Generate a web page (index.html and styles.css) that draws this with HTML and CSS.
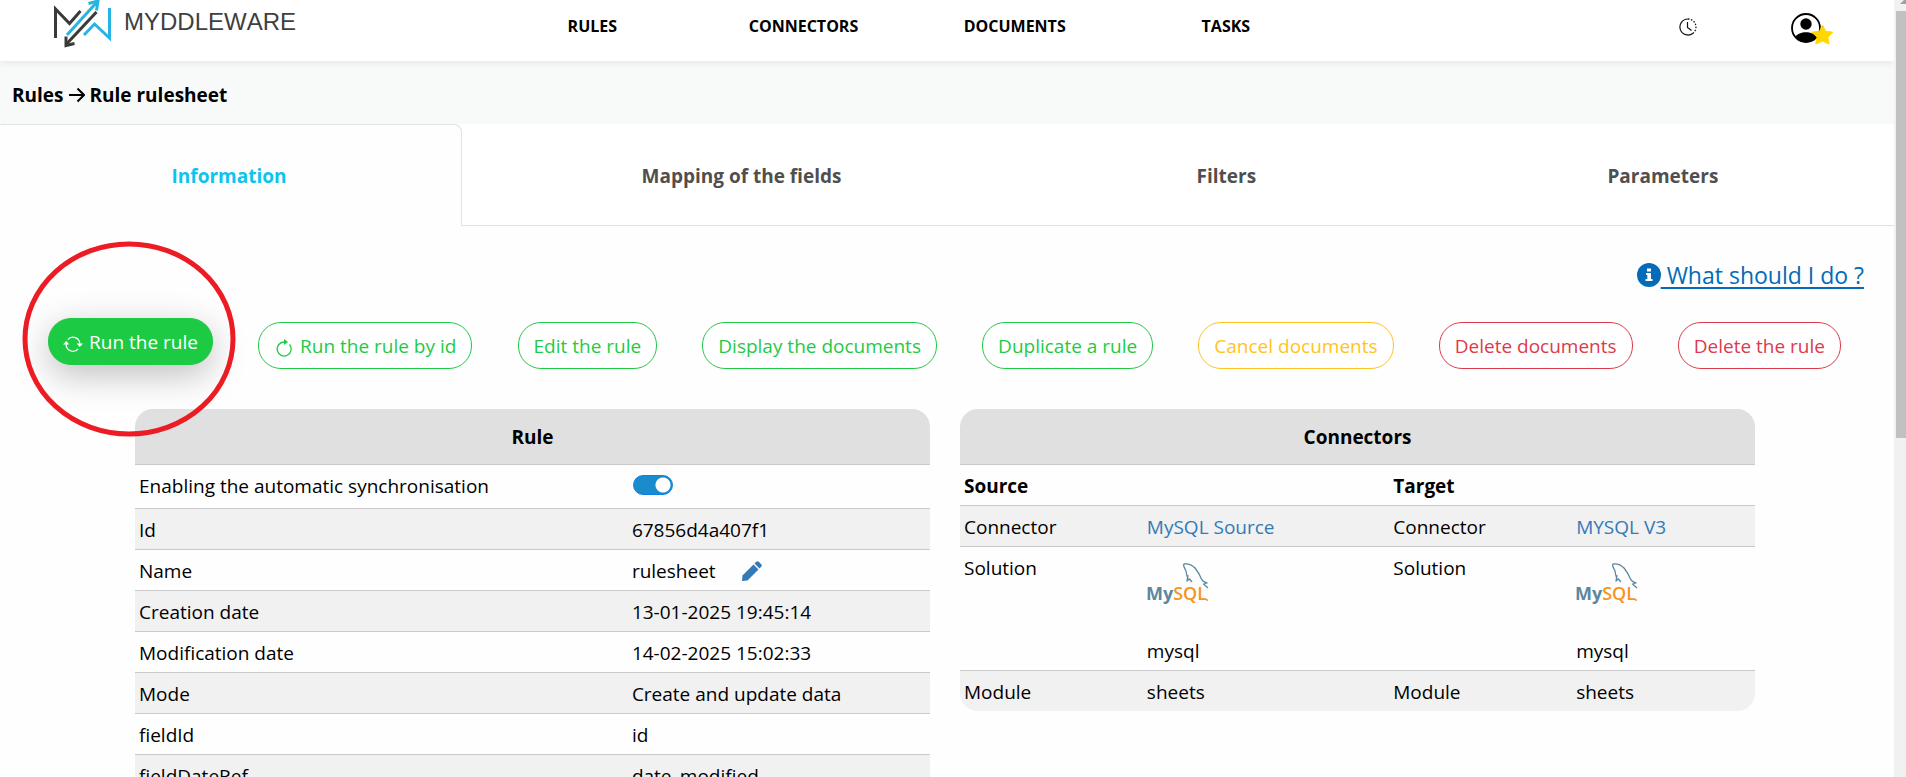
FILE: index.html
```
<!DOCTYPE html>
<html lang="en">
<head>
<meta charset="utf-8">
<title>Myddleware - Rule rulesheet</title>
<link rel="stylesheet" href="styles.css">
</head>
<body>
<div class="app">
  <div class="page">
    <header class="topbar">
      <a class="brand" href="#" aria-label="Myddleware">
        <svg class="brand-logo" width="256" height="50" viewBox="0 0 256 50">
          <g fill="none" stroke="#3a3a3a" stroke-width="3">
            <path d="M5.500 38V9L19.500 23.500L30.500 11"/>
            <path d="M46.500 12L16.500 44"/>
            <path d="M16 36.500V45.500L24.500 43.500"/>
          </g>
          <g fill="none" stroke="#27b4e4" stroke-width="3">
            <path d="M17 35L47 2"/>
            <path d="M38.500 3.500L48 1L46.500 10.500"/>
            <path d="M34 35L44.500 24L59.500 38V8"/>
          </g>
          <text class="brand-name" x="74" y="30">MYDDLEWARE</text>
        </svg>
      </a>
      <nav class="menu" aria-label="Main">
        <a href="#">RULES</a>
        <a href="#">CONNECTORS</a>
        <a href="#">DOCUMENTS</a>
        <a href="#">TASKS</a>
      </nav>
      <div class="tools">
        <a href="#" aria-label="History">
          <svg width="18" height="18" viewBox="0 0 18 18" fill="none" stroke="#111">
            <path d="M9 1A8 8 0 1 0 14 15.200" stroke-width="1.200"/>
            <path d="M9 1A8 8 0 0 1 14 15.200" stroke-width="1.300" stroke-dasharray="1.500 1.500"/>
            <path d="M8.500 4V9.500L12.500 12.500" stroke-width="1.200"/>
          </svg>
        </a>
        <a class="account" href="#" aria-label="Account">
          <svg width="42" height="32" viewBox="0 0 42 32">
            <circle cx="15" cy="15" r="14" fill="#fff" stroke="#000" stroke-width="1.800"/>
            <circle cx="15" cy="11" r="5.700"/>
            <path d="M4 24C8 17.500 22 17.500 26 24A14 14 0 0 1 4 24Z"/>
            <path d="M31.500 12L34.500 18.200L41.800 19.200L36.800 24.200L38 31L31.500 28L24.800 31L26 24.200L21 19.200L28.500 18.200Z" fill="#ffd600" stroke="#ffd600" stroke-linejoin="round"/>
          </svg>
        </a>
      </div>
    </header>

    <div class="crumbs">
      <a href="#">Rules</a>
      <svg width="16" height="16" viewBox="0 0 16 16" fill="none" stroke="#000" stroke-width="2" aria-hidden="true"><path d="M0 8H14M8.500 1.500L15 8L8.500 14.500"/></svg>
      <span>Rule rulesheet</span>
    </div>

    <nav class="tabs" aria-label="Rule sections">
      <button class="tab tab-active" type="button">Information</button>
      <button class="tab" type="button">Mapping of the fields</button>
      <button class="tab" type="button">Filters</button>
      <button class="tab" type="button">Parameters</button>
    </nav>

    <main>
      <div class="help">
        <a href="#"><svg width="24" height="24" viewBox="0 0 24 24" aria-hidden="true"><circle cx="12" cy="12" r="12" fill="#036bb7"/><path d="M10 5.500H14V8.500H10ZM9 10H14V16H15.500V18H8.500V16H10.300V12H9Z" fill="#fff"/></svg><span>&nbsp;What should I do ?</span></a>
      </div>

      <div class="actions">
        <div class="highlight">
          <button class="btn btn-run" type="button"><svg width="20" height="18" viewBox="0 0 20 18" fill="none" stroke="currentColor" stroke-width="1.200" aria-hidden="true"><path d="M4.800 4.600A6.800 6.800 0 0 1 16.800 9M3.200 9A6.800 6.800 0 0 0 15.200 13.800"/><path d="M0 9.500L3.200 6L6.400 9.500ZM13.600 8.500H20L16.800 12Z" fill="currentColor" stroke="none"/></svg>Run the rule</button>
          <svg class="ring" width="214" height="196" viewBox="0 0 214 196" aria-hidden="true"><ellipse cx="107" cy="98" rx="104" ry="95" fill="none" stroke="#ed1c24" stroke-width="5"/></svg>
        </div>
        <button class="btn btn-green" type="button"><svg width="20" height="18" viewBox="0 0 20 18" fill="none" stroke="currentColor" stroke-width="1.300" aria-hidden="true"><path d="M10 3A7 7 0 1 0 15.500 5.500"/><path d="M10 0L14 3L10 6Z" fill="currentColor" stroke="none"/></svg>Run the rule by id</button>
        <button class="btn btn-green" type="button">Edit the rule</button>
        <button class="btn btn-green" type="button">Display the documents</button>
        <button class="btn btn-green" type="button">Duplicate a rule</button>
        <button class="btn btn-yellow" type="button">Cancel documents</button>
        <button class="btn btn-red" type="button">Delete documents</button>
        <button class="btn btn-red" type="button">Delete the rule</button>
      </div>

      <div class="panels">
        <table class="panel panel-rule">
          <colgroup><col class="c-name"><col></colgroup>
          <thead><tr><th colspan="2">Rule</th></tr></thead>
          <tbody>
            <tr class="row-switch"><td><label for="sync">Enabling the automatic synchronisation</label></td><td><input class="switch" id="sync" type="checkbox" role="switch" checked></td></tr>
            <tr><td>Id</td><td>67856d4a407f1</td></tr>
            <tr><td>Name</td><td><div class="name-cell">rulesheet
              <button class="edit" type="button" aria-label="Edit the name"><svg width="20" height="20" viewBox="0 0 20 20" fill="#337ab7"><path d="M0 20L0.500 14.500L11.500 3.500L16.500 8.500L5.500 19.500Z"/><path d="M12.500 2.500L14 1Q15.500 -.5 17 1L19.200 3.200Q20.500 4.500 19 6L17.500 7.500Z"/></svg></button></div></td></tr>
            <tr><td>Creation date</td><td>13-01-2025 19:45:14</td></tr>
            <tr><td>Modification date</td><td>14-02-2025 15:02:33</td></tr>
            <tr><td>Mode</td><td>Create and update data</td></tr>
            <tr><td>fieldId</td><td>id</td></tr>
            <tr><td>fieldDateRef</td><td>date_modified</td></tr>
          </tbody>
        </table>

        <table class="panel panel-connectors">
          <colgroup><col class="c-label"><col class="c-source"><col class="c-label"><col></colgroup>
          <thead><tr><th colspan="4">Connectors</th></tr></thead>
          <tbody>
            <tr class="subhead"><th colspan="2">Source</th><th colspan="2">Target</th></tr>
            <tr><td>Connector</td><td><a href="#">MySQL Source</a></td><td>Connector</td><td><a href="#">MYSQL V3</a></td></tr>
            <tr>
              <td>Solution</td>
              <td><svg class="mysql" width="62" height="62" viewBox="0 0 62 62" role="img" aria-label="MySQL">
                <g fill="none" stroke="#5d87a1" stroke-width="1.300" stroke-linejoin="round"><path d="M41 26Q39.500 22 39 18Q35.500 11.500 37 11Q43 10 48 15Q52 20 54.500 26Q56 29 60 30L56.500 31L61 35"/><path d="M41 22L40 28L42.500 26L45 29"/></g>
                <text class="my" x="-1" y="47">My<tspan class="sql">SQL</tspan></text><circle cx="60" cy="47" r="1" fill="#f7941e"/></svg>mysql</td>
              <td>Solution</td>
              <td><svg class="mysql" width="62" height="62" viewBox="0 0 62 62" role="img" aria-label="MySQL">
                <g fill="none" stroke="#5d87a1" stroke-width="1.300" stroke-linejoin="round"><path d="M41 26Q39.500 22 39 18Q35.500 11.500 37 11Q43 10 48 15Q52 20 54.500 26Q56 29 60 30L56.500 31L61 35"/><path d="M41 22L40 28L42.500 26L45 29"/></g>
                <text class="my" x="-1" y="47">My<tspan class="sql">SQL</tspan></text><circle cx="60" cy="47" r="1" fill="#f7941e"/></svg>mysql</td>
            </tr>
            <tr><td>Module</td><td>sheets</td><td>Module</td><td>sheets</td></tr>
          </tbody>
        </table>
      </div>
    </main>
  </div>
  <div class="scrollbar" aria-hidden="true">
    <svg width="10" height="11" viewBox="0 0 10 11"><path d="M4 4L8 0H10V4Z" fill="#a0a0a0"/></svg>
    <div class="thumb"></div>
  </div>
</div>
</body>
</html>
```
FILE: styles.css
```
* { box-sizing: border-box; }

body {
  margin: 0;
  background: #fefefe;
  color: #000;
  font: 19px/30px "Open Sans", "Noto Sans", sans-serif;
}

a { color: inherit; text-decoration: none; }
button { font: inherit; cursor: pointer; }
svg { display: block; flex: none; }

.app {
  display: flex;
  height: 100vh;
  overflow: hidden;
}
.page { flex: 1; min-width: 0; overflow: hidden; }

/* Top bar */
.topbar {
  position: relative;
  display: grid;
  grid-template-columns: 25.7% 44.6% 1fr;
  height: 61px;
  background: #fff;
  box-shadow: 0 2px 8px rgba(0, 0, 0, 0.08);
}
.brand { padding-left: 50px; }
.brand-name {
  font: 24px "Liberation Sans", Arial, sans-serif;
  font-kerning: none;
  fill: #3f3f3f;
}
.menu {
  display: grid;
  grid-template-columns: repeat(4, 1fr);
  padding-top: 11px;
  font-size: 16px;
  font-weight: 700;
  text-align: center;
}
.tools {
  display: flex;
  justify-content: flex-end;
  gap: 94px;
  padding: 13px 61px 0 0;
}
.tools a:first-child { padding-top: 5px; }

/* Breadcrumb */
.crumbs {
  display: flex;
  align-items: center;
  gap: 5px;
  height: 63px;
  padding: 4px 12px 0;
  background: #f8faf9;
  font-weight: 700;
}

/* Tabs */
.tabs {
  display: grid;
  grid-template-columns: 24.4% 29.5% 21.7% 1fr;
  background: #fff;
  border-bottom: 1px solid #dee2e6;
}
.tab {
  height: 102px;
  margin-bottom: -1px;
  padding: 2px 16px 0;
  border: 1px solid transparent;
  background: none;
  color: #4f4f4f;
  font-weight: 700;
}
.tab-active {
  padding-right: 20px;
  border-color: #dee2e6 #dee2e6 #fefefe transparent;
  border-radius: 0 8px 0 0;
  background: #fefefe;
  color: #0dc3ef;
}

/* Help link */
.help {
  display: flex;
  justify-content: flex-end;
  padding: 32px 30px 0 0;
  color: #036bb7;
  font-size: 23px;
  line-height: 34px;
}
.help a { display: flex; align-items: center; }
.help span {
  text-decoration: underline;
  text-decoration-thickness: 2px;
  text-underline-offset: 3px;
}

/* Rule actions */
.actions {
  display: flex;
  justify-content: space-between;
  padding: 30px 53px 0 48px;
}
.btn {
  display: flex;
  align-items: center;
  gap: 6px;
  height: 47px;
  padding: 0 15px;
  border: 1px solid currentColor;
  border-radius: 23px;
  background: #fff;
  white-space: nowrap;
}
.btn svg { margin-top: 4px; }
.btn-green { color: #1fca45; }
.btn-yellow { color: #ffc321; }
.btn-red { color: #dc3a4b; }
.btn-run {
  padding: 0 14px;
  border-color: #1ccb43;
  background: #1ccb43;
  color: #fff;
  box-shadow: 0 10px 35px rgba(0, 0, 0, 0.25);
}
.highlight { position: relative; margin-top: -4px; }
.ring {
  position: absolute;
  top: -77px;
  left: -26px;
  z-index: 1;
  pointer-events: none;
}

/* Panels */
.panels {
  display: grid;
  grid-template-columns: 1fr 1fr;
  gap: 30px;
  align-items: start;
  padding: 40px 139px 40px 135px;
}
.panel {
  width: 100%;
  table-layout: fixed;
  border-spacing: 0;
  border-radius: 18px;
  overflow: hidden;
}
.panel th, .panel td {
  padding: 6px 4px 4px;
  border-bottom: 1px solid #c9c9c9;
  text-align: left;
  vertical-align: top;
}
.panel thead th {
  padding: 13px 5px 12px;
  background: #e0e0e0;
  text-align: center;
}
.panel tbody tr:nth-child(even) { background: #f1f1f1; }
.panel tbody tr:last-child td { border-bottom: 0; }
.panel a { color: #337ab7; }
.c-name { width: 62%; }
.c-label { width: 23%; }
.c-source { width: 31%; }
.panel .row-switch td { padding-bottom: 7px; }

.switch {
  display: block;
  appearance: none;
  width: 40px;
  height: 20px;
  margin: 4px 0 6px 1px;
  border: 1px solid #0d7fe8;
  border-radius: 10px;
  background: radial-gradient(circle at 29px 9px, #fff 7px, #1a8ccb 8px);
}
.name-cell { display: flex; align-items: center; gap: 26px; }
.edit { padding: 0; border: 0; background: none; }

.mysql { margin-bottom: 21px; }
.my {
  font: 700 18px "Open Sans", sans-serif;
  fill: #5d87a1;
}
.sql { font-weight: 600; fill: #f7941e; }

/* Scroll track */
.scrollbar {
  width: 12px;
  padding-left: 2px;
  background: #f1f1f1;
}
.thumb { height: 55%; background: #c1c1c1; }
```
